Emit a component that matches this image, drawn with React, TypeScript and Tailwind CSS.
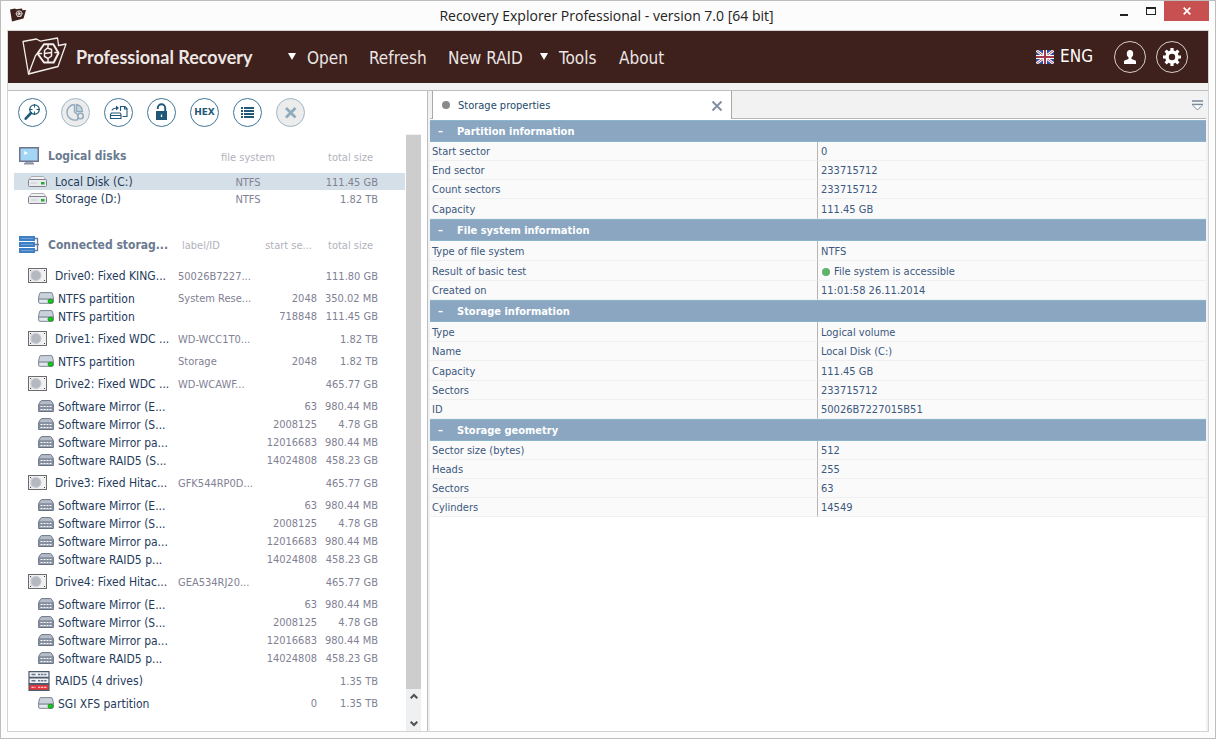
import React, { useState } from "react";

type IconProps = { children: React.ReactNode };

const BrandFolder = () => (
  <svg width="46" height="40" viewBox="0 0 46 40" fill="none" stroke="#f3eeec" strokeWidth="1.3" strokeLinejoin="round" strokeLinecap="round" aria-hidden="true">
    <path d="M6.500 37 1 4.500 14.500 2l4 2.200L35.500 1l1 7" />
    <path d="M6.500 37 13.500 18.500l2-2M6.500 37 36 29.500 44 7l-7.500 1.500" />
    <path d="M15.500 16.500 22 7.200h9.300l5.200 8.800-4.800 9.500H22z" strokeWidth="2" />
    <path d="M22.500 13.500v6M29.500 12.500v6.500M22.500 16.500l7-1M16 16.500l3.500 0M33 15.500l3 0M22.500 13.500l3-2.500 4 1.500M22.500 19.500l3.500 2 3.500-2.500M26 11V8M26 21.500V25" strokeWidth="1.500" />
  </svg>
);

const SmallFolder = () => (
  <svg width="16" height="14" viewBox="0 0 16 14" aria-hidden="true">
    <path d="M0 1.500 5 .5l1 .8L12 .4l.5 1.800L16 2l-2.500 8.500L2 13.500z" fill="#3e201c" />
    <path d="M7.500 3h3.300l1.500 2.600-1.500 2.900H7.500L6 5.800zM6 5.800h6.300M8 3.200l2.700 5M10.500 3.200l-3 5.200" fill="none" stroke="#f3eeec" strokeWidth=".8" />
  </svg>
);

const Flag = () => (
  <svg width="18" height="14" viewBox="0 0 18 14" aria-hidden="true">
    <rect width="18" height="14" fill="#2f4b9b" />
    <path d="M0 0l18 14M18 0L0 14" stroke="#fff" strokeWidth="2.600" />
    <path d="M0 0l18 14M18 0L0 14" stroke="#a8434f" strokeWidth=".9" />
    <path d="M9 0v14M0 7h18" stroke="#fff" strokeWidth="4" />
    <path d="M9 0v14M0 7h18" stroke="#a03a4c" strokeWidth="2" />
  </svg>
);

const Glyph = ({ children }: IconProps) => (
  <svg width="27" height="27" viewBox="0 0 27 27" fill="none" stroke="currentColor" aria-hidden="true">
    {children}
  </svg>
);

const Monitor = () => (
  <svg width="20" height="18" viewBox="0 0 20 18" aria-hidden="true">
    <rect x=".75" y=".75" width="18.500" height="13.500" fill="#a3d5f5" stroke="#70758d" strokeWidth="1.500" />
    <path d="M5 4l4 2-3.500 2z" fill="#fff" />
    <path d="M6 15h8v1H6z" fill="#a5a8b8" />
    <path d="M5 16h10v1.500H5z" fill="#8c90a4" />
  </svg>
);

const StorageStack = () => (
  <svg width="20" height="17" viewBox="0 0 20 17" aria-hidden="true">
    <path d="M0 0h16v5H0zM0 6h16v5H0zM0 12h16v5H0z" fill="#3f7fc4" />
    <path d="M2 2.500h12M2 8.500h12M2 14.500h12" stroke="#6ea3da" />
    <path d="M16 2.500h2.500v12H16M16 8.500h4" fill="none" stroke="#6b7b92" strokeWidth="1.300" />
  </svg>
);

const DiskIcon = () => (
  <svg width="19" height="11" viewBox="0 0 19 11" aria-hidden="true">
    <path d="M.8 4.500 2.500 1.500q.5-1 1.500-1h11q1 0 1.500 1l1.700 3z" fill="#f2f2f3" stroke="#a3a5ae" strokeWidth=".9" />
    <rect x=".5" y="3.500" width="18" height="7" rx="1" fill="#e9eaec" stroke="#80838f" />
    <path d="M3 7h6" stroke="#c9cbd1" />
    <path d="M13 6h3.500v2.500H13z" fill="#1fae2f" />
  </svg>
);

const DriveIcon = () => (
  <svg width="19" height="15" viewBox="0 0 19 15" aria-hidden="true">
    <rect x=".5" y=".5" width="18" height="14" fill="#f1f1f2" stroke="#6b6c70" />
    <path d="M2.500 2.500h3v10h-3z" fill="#dcdce0" />
    <circle cx="8" cy="7.500" r="5" fill="#b4b8c0" stroke="#c7c9d0" />
    <path d="M2 2h1v1H2zM16 2h1v1h-1zM2 12h1v1H2zM16 12h1v1h-1z" fill="#44464c" />
  </svg>
);

const PartitionIcon = () => (
  <svg width="16" height="12" viewBox="0 0 16 12" aria-hidden="true">
    <path d="M.6 6 1.500 1.800Q1.800.6 3 .6h10q1.200 0 1.500 1.200L15.400 6v4q0 1.300-1.300 1.300H1.900Q.6 11.300.6 10z" fill="#c9d1da" stroke="#7c8794" />
    <path d="M1 7h14" stroke="#76828f" />
    <path d="M1.500 8h13v2.500h-13z" fill="#e4e9ee" />
    <ellipse cx="12.500" cy="9.200" rx="2.500" ry="2" fill="#11d411" stroke="#12801a" strokeWidth=".8" />
  </svg>
);

const MirrorIcon = () => (
  <svg width="16" height="12" viewBox="0 0 16 12" aria-hidden="true">
    <path d="M.6 4.500 2.600 1.200q.4-.6 1-.6h8.800q.6 0 1 .6l2 3.300v7H.6z" fill="#b4bcc8" stroke="#6c7788" />
    <path d="M1 4.500h14v1H1zM1 7.500h14v1H1zM1 11h14v1H1z" fill="#657083" />
    <path d="M1 5.500h14v2H1zM1 8.500h14v2H1z" fill="#808a9a" />
    <path d="M2.500 6.500h11.500M2.500 9.500h11.500" stroke="#fff" strokeWidth="1" strokeDasharray="2 1" />
  </svg>
);

const RaidIcon = () => (
  <svg width="22" height="20" viewBox="0 0 22 20" aria-hidden="true">
    <path d="M1 .7h20v5.600H1zM1 7h20v5.600H1z" fill="#f0f2f5" stroke="#4d5c6e" strokeWidth="1.200" />
    <path d="M1 13.300h20v6H1z" fill="#e2363c" stroke="#4d5c6e" strokeWidth="1.200" />
    <path d="M3.500 3.500h4M3.500 9.700h4" stroke="#66758a" strokeWidth="1.500" />
    <path d="M10 3.500h8.500M10 9.700h8.500" stroke="#66758a" strokeWidth="1.500" strokeDasharray="2.300 .8" />
    <path d="M3.500 16.300h4M10 16.300h8.500" stroke="#f4c9cb" strokeWidth="1.300" strokeDasharray="2.300 .8" />
  </svg>
);

const toolButtons = [
  {
    label: "Search for files",
    disabled: false,
    icon: (
      <Glyph>
        <circle cx="15.500" cy="10.500" r="4.700" strokeWidth="1.300" />
        <path d="M15.500 5v3.500M15.500 12.500V16M10 10.500h3.500M17.500 10.500H21" strokeWidth="1" />
        <path d="M12 14l-5.300 5.700" strokeWidth="2.600" strokeLinecap="round" />
      </Glyph>
    ),
  },
  {
    label: "Analyze partition",
    disabled: true,
    icon: (
      <Glyph>
        <path d="M12.500 5.500a7.800 7.800 0 1 0 2 15.400M12.500 5.500V13l4 3.500M14.500 5.500q5.500 1 6 7h-6z" strokeWidth="1.400" />
        <path d="M15 6q4.500 1 5 6h-5z" fill="currentColor" stroke="none" opacity=".35" />
        <circle cx="18.500" cy="17" r="2.800" strokeWidth="1.500" />
        <path d="M16.500 19l-2 2.500" strokeWidth="1.800" />
      </Glyph>
    ),
  },
  {
    label: "Save disk image",
    disabled: false,
    icon: (
      <Glyph>
        <path d="M5.500 19.500v-4l1-1.500h8.500l1 1.500v4zM5.500 16.500h10.500" strokeWidth="1.100" />
        <path d="M7 11.500q.5-2.500 5.500-2.500" strokeWidth="1.200" />
        <path d="M11 6.500 14 9l-3 2.500z" fill="currentColor" stroke="none" />
        <path d="M15.500 12V7.500h4.500l2 2v8h-4.500M19.500 7.500V10H22" strokeWidth="1.100" />
      </Glyph>
    ),
  },
  {
    label: "Unlock storage",
    disabled: false,
    icon: (
      <Glyph>
        <path d="M8 12h11v9H8z" fill="currentColor" stroke="none" />
        <path d="M9.800 10V9a3.700 3.700 0 0 1 7.400 0v3.500" strokeWidth="1.900" />
        <path d="M13.500 15.500v2.500" stroke="#fff" strokeWidth="1.300" />
      </Glyph>
    ),
  },
  {
    label: "Hexadecimal viewer",
    disabled: false,
    icon: <span className="font-['DejaVu_Sans'] text-[9px] leading-none font-bold">HEX</span>,
  },
  {
    label: "List partitions",
    disabled: false,
    icon: (
      <Glyph>
        <path d="M7 9h2M10 9h10M7 12h2M10 12h10M7 15h2M10 15h10M7 18h2M10 18h10" strokeWidth="2" />
      </Glyph>
    ),
  },
  {
    label: "Close storage",
    disabled: true,
    icon: (
      <Glyph>
        <path d="M9 9l9.500 9.500M18.500 9 9 18.500" strokeWidth="2.800" />
      </Glyph>
    ),
  },
];

const logicalDisks = [
  { name: "Local Disk (C:)", fs: "NTFS", size: "111.45 GB", selected: true },
  { name: "Storage (D:)", fs: "NTFS", size: "1.82 TB", selected: false },
];

type Kind = "drive" | "partition" | "mirror" | "raid";
type StorageRow = { kind: Kind; name: string; label?: string; start?: string; size: string };

const storages: StorageRow[] = [
  { kind: "drive", name: "Drive0: Fixed KING...", label: "50026B7227...", size: "111.80 GB" },
  { kind: "partition", name: "NTFS partition", label: "System Rese...", start: "2048", size: "350.02 MB" },
  { kind: "partition", name: "NTFS partition", start: "718848", size: "111.45 GB" },
  { kind: "drive", name: "Drive1: Fixed WDC ...", label: "WD-WCC1T0...", size: "1.82 TB" },
  { kind: "partition", name: "NTFS partition", label: "Storage", start: "2048", size: "1.82 TB" },
  { kind: "drive", name: "Drive2: Fixed WDC ...", label: "WD-WCAWF...", size: "465.77 GB" },
  { kind: "mirror", name: "Software Mirror (E...", start: "63", size: "980.44 MB" },
  { kind: "mirror", name: "Software Mirror (S...", start: "2008125", size: "4.78 GB" },
  { kind: "mirror", name: "Software Mirror pa...", start: "12016683", size: "980.44 MB" },
  { kind: "mirror", name: "Software RAID5 (S...", start: "14024808", size: "458.23 GB" },
  { kind: "drive", name: "Drive3: Fixed Hitac...", label: "GFK544RP0D...", size: "465.77 GB" },
  { kind: "mirror", name: "Software Mirror (E...", start: "63", size: "980.44 MB" },
  { kind: "mirror", name: "Software Mirror (S...", start: "2008125", size: "4.78 GB" },
  { kind: "mirror", name: "Software Mirror pa...", start: "12016683", size: "980.44 MB" },
  { kind: "mirror", name: "Software RAID5 p...", start: "14024808", size: "458.23 GB" },
  { kind: "drive", name: "Drive4: Fixed Hitac...", label: "GEA534RJ20...", size: "465.77 GB" },
  { kind: "mirror", name: "Software Mirror (E...", start: "63", size: "980.44 MB" },
  { kind: "mirror", name: "Software Mirror (S...", start: "2008125", size: "4.78 GB" },
  { kind: "mirror", name: "Software Mirror pa...", start: "12016683", size: "980.44 MB" },
  { kind: "mirror", name: "Software RAID5 p...", start: "14024808", size: "458.23 GB" },
  { kind: "raid", name: "RAID5 (4 drives)", size: "1.35 TB" },
  { kind: "partition", name: "SGI XFS partition", start: "0", size: "1.35 TB" },
];

const kindIcon: Record<Kind, React.ReactNode> = {
  drive: <DriveIcon />,
  partition: <PartitionIcon />,
  mirror: <MirrorIcon />,
  raid: <RaidIcon />,
};

type Property = { name: string; value: string; tall?: boolean; status?: boolean };

const sections: { title: string; rows: Property[] }[] = [
  {
    title: "Partition information",
    rows: [
      { name: "Start sector", value: "0" },
      { name: "End sector", value: "233715712" },
      { name: "Count sectors", value: "233715712" },
      { name: "Capacity", value: "111.45 GB", tall: true },
    ],
  },
  {
    title: "File system information",
    rows: [
      { name: "Type of file system", value: "NTFS", tall: true },
      { name: "Result of basic test", value: "File system is accessible", tall: true, status: true },
      { name: "Created on", value: "11:01:58 26.11.2014" },
    ],
  },
  {
    title: "Storage information",
    rows: [
      { name: "Type", value: "Logical volume", tall: true },
      { name: "Name", value: "Local Disk (C:)" },
      { name: "Capacity", value: "111.45 GB", tall: true },
      { name: "Sectors", value: "233715712" },
      { name: "ID", value: "50026B7227015B51" },
    ],
  },
  {
    title: "Storage geometry",
    rows: [
      { name: "Sector size (bytes)", value: "512" },
      { name: "Heads", value: "255" },
      { name: "Sectors", value: "63" },
      { name: "Cylinders", value: "14549" },
    ],
  },
];

function TitleBar() {
  return (
    <div className="flex h-[29px] shrink-0 items-start pl-[9px]">
      <div className="flex w-[93px] pt-[7px]">
        <SmallFolder />
      </div>
      <h1 className="flex-1 text-center font-['Open_Sans','Noto_Sans',sans-serif] text-[14px] leading-[29px] text-[#222]">
        Recovery Explorer Professional - version 7.0 [64 bit]
      </h1>
      <div className="flex">
        <button type="button" aria-label="Minimize" className="flex h-5 w-[27px] items-center justify-center">
          <svg width="12" height="12" viewBox="0 0 12 12" aria-hidden="true">
            <path d="M2 9h8v2H2z" fill="#222" />
          </svg>
        </button>
        <button type="button" aria-label="Maximize" className="flex h-5 w-[27px] items-center justify-center">
          <svg width="10" height="8" viewBox="0 0 10 8" aria-hidden="true">
            <path d="M0 0h10v8H0zM1 2v5h8V2z" fill="#222" fillRule="evenodd" />
          </svg>
        </button>
        <button type="button" aria-label="Close" className="mr-[6px] flex h-5 w-[45px] items-center justify-center bg-[#c75050]">
          <svg width="8" height="8" viewBox="0 0 8 8" aria-hidden="true">
            <path d="M.7.7l6.600 6.600M7.300.7.7 7.300" stroke="#fff" strokeWidth="1.700" />
          </svg>
        </button>
      </div>
    </div>
  );
}

const Caret = () => (
  <svg width="8" height="7" viewBox="0 0 8 7" className="mb-1" aria-hidden="true">
    <path d="M0 0h8L4 7z" fill="#fff" />
  </svg>
);

function Header() {
  return (
    <header className="flex h-[52px] shrink-0 items-center bg-[#3e201c] pr-5 pl-[14px] text-[#ece6e4]">
      <BrandFolder />
      <span className="w-[217px] pl-2 font-['Lato','Noto_Sans',sans-serif] text-[18px] font-bold whitespace-nowrap">
        Professional Recovery
      </span>
      <nav className="flex items-center pt-[3px] text-[17px] whitespace-nowrap">
        <button type="button" className="flex w-[84px] items-center gap-[11px] pl-[3px]">
          <Caret />
          Open
        </button>
        <button type="button" className="w-[79px] text-left">Refresh</button>
        <button type="button" className="w-[92px] text-left">New RAID</button>
        <button type="button" className="flex w-[79px] items-center gap-[11px]">
          <Caret />
          Tools
        </button>
        <button type="button">About</button>
      </nav>
      <div className="ml-auto flex items-center">
        <button type="button" className="flex items-center gap-[6px] text-[17px] text-white">
          <Flag />
          ENG
        </button>
        <button type="button" aria-label="Account" className="ml-[21px] flex size-8 items-center justify-center rounded-full border border-[#d8cecb]">
          <svg width="12" height="14" viewBox="0 0 12 14" fill="#fff" aria-hidden="true">
            <ellipse cx="6" cy="3.800" rx="3.200" ry="3.800" />
            <path d="M4.500 6h3v3l4 1.500q.5.300.5 1V14H0v-2.500q0-.7.500-1l4-1.500z" />
          </svg>
        </button>
        <button type="button" aria-label="Settings" className="ml-[10px] flex size-8 items-center justify-center rounded-full border border-[#d8cecb]">
          <svg width="18" height="18" viewBox="-9 -9 18 18" aria-hidden="true">
            <circle r="5" fill="none" stroke="#fff" strokeWidth="3.600" />
            <path d="M0-9V-5M0 5V9M-9 0H-5M5 0H9M-6.400-6.400l2.800 2.800M6.400 6.400 3.600 3.600M-6.400 6.400l2.800-2.800M6.400-6.400 3.600-3.600" stroke="#fff" strokeWidth="3.200" />
          </svg>
        </button>
      </div>
    </header>
  );
}

function Sidebar() {
  return (
    <aside className="flex w-[420px] shrink-0 flex-col border-r border-[#bdbdbd] bg-white">
      <div className="flex gap-[14px] px-[10px] pt-[7px] pb-[7px]">
        {toolButtons.map((tool) => (
          <button
            key={tool.label}
            type="button"
            aria-label={tool.label}
            disabled={tool.disabled}
            className="flex size-[29px] items-center justify-center rounded-full border border-[#3f7595] text-[#1f5878] disabled:border-[#9fb6c4] disabled:bg-[#ececed] disabled:text-[#8fabbd]"
          >
            {tool.icon}
          </button>
        ))}
      </div>
      <div className="flex min-h-0 flex-1">
        <div className="min-w-0 flex-1 overflow-hidden pl-[6px] text-[11px] text-[#7f8194]">
          <table className="mt-[5px] w-full table-fixed border-collapse leading-[15px]">
            <colgroup>
              <col />
              <col className="w-[100px]" />
              <col className="w-[80px]" />
              <col className="w-[27px]" />
            </colgroup>
            <thead>
              <tr className="h-[34px] text-[#b1b2bc]">
                <th scope="col" className="p-0 text-left">
                  <div className="flex items-center gap-[9px] pl-[5px] text-[12px] font-bold text-[#6b7a90]">
                    <Monitor />
                    Logical disks
                  </div>
                </th>
                <th scope="col" className="p-0 pt-[2px] text-center font-normal">file system</th>
                <th scope="col" className="p-0 pt-[2px] pr-[5px] text-right font-normal">total size</th>
                <td />
              </tr>
            </thead>
            <tbody>
              {logicalDisks.map((disk) => (
                <tr key={disk.name} className={disk.selected ? "h-[17px] bg-[#d5dfe7]" : "h-[17px]"}>
                  <td className="p-0">
                    <div className="flex items-center gap-2 pl-[14px] text-[12px] text-[#1f3b5c]">
                      <DiskIcon />
                      <span className="pt-[2px]">{disk.name}</span>
                    </div>
                  </td>
                  <td className="p-0 pt-[2px] text-center">{disk.fs}</td>
                  <td className="p-0 pt-[2px] text-right">{disk.size}</td>
                  <td />
                </tr>
              ))}
            </tbody>
          </table>
          <table className="mt-5 w-full table-fixed border-collapse leading-4 whitespace-nowrap">
            <colgroup>
              <col />
              <col className="w-[78px]" />
              <col className="w-[61px]" />
              <col className="w-[61px]" />
              <col className="w-[27px]" />
            </colgroup>
            <thead>
              <tr className="h-[35px] text-[#b1b2bc]">
                <th scope="col" className="p-0 text-left">
                  <div className="flex items-center gap-[9px] pl-[5px] text-[12px] font-bold text-[#6b7a90]">
                    <StorageStack />
                    Connected storag...
                  </div>
                </th>
                <th scope="col" className="p-0 pt-[2px] pl-1 text-left font-normal">label/ID</th>
                <th scope="col" className="p-0 pt-[2px] pr-[5px] text-right font-normal">start se...</th>
                <th scope="col" className="p-0 pt-[2px] pr-[5px] text-right font-normal">total size</th>
                <td />
              </tr>
            </thead>
            <tbody>
              {storages.map((row, i) => {
                const parent = row.kind === "drive" || row.kind === "raid";
                return (
                  <tr key={i} className={parent ? "h-[27px]" : "h-[18px]"}>
                    <td className="p-0">
                      <div
                        className={
                          parent
                            ? "flex items-center pl-[14px] text-[12px] text-[#1f3b5c]"
                            : "flex items-center pl-6 text-[12px] text-[#1f3b5c]"
                        }
                      >
                        <span className={parent ? "w-[27px]" : "w-5"}>{kindIcon[row.kind]}</span>
                        <span className={parent ? "" : "pt-[2px]"}>{row.name}</span>
                      </div>
                    </td>
                    <td className="p-0 pt-[2px]">{row.label}</td>
                    <td className="p-0 pt-[2px] text-right">{row.start}</td>
                    <td className="p-0 pt-[2px] text-right">{row.size}</td>
                    <td />
                  </tr>
                );
              })}
            </tbody>
          </table>
        </div>
        <div className="mr-[6px] ml-px flex w-[15px] flex-col bg-[#eff0f1]">
          <div className="mt-px flex-1 bg-[#cdcdcd]" />
          <button type="button" aria-label="Scroll up" className="flex h-[14px] items-center justify-center">
            <svg width="8" height="6" viewBox="0 0 8 6" fill="none" stroke="#505054" strokeWidth="2" aria-hidden="true">
              <path d="M.7 5.300 4 2l3.300 3.300" />
            </svg>
          </button>
          <button type="button" aria-label="Scroll down" className="mt-[14px] flex h-[14px] items-center justify-center">
            <svg width="8" height="6" viewBox="0 0 8 6" fill="none" stroke="#505054" strokeWidth="2" aria-hidden="true">
              <path d="M.7.7 4 4 7.300.7" />
            </svg>
          </button>
        </div>
      </div>
    </aside>
  );
}

function Properties() {
  const [closed, setClosed] = useState<string[]>([]);
  const toggle = (title: string) =>
    setClosed((list) => (list.includes(title) ? list.filter((t) => t !== title) : [...list, title]));

  return (
    <main className="flex min-w-0 flex-1 flex-col bg-[#f2f2f2] pr-[2px] pl-[2px]">
      <div className="flex h-7 shrink-0">
        <div className="w-[2px] border-b border-[#b8b8b8]" />
        <div className="flex w-[300px] items-center border-x border-[#a9a9a9] bg-white pr-2 pl-[9px] text-[11px] text-[#1c4a6b]">
          <span className="mr-2 size-2 rounded-full bg-[#8a8a8a]" />
          <span className="pt-[3px]">Storage properties</span>
          <button type="button" aria-label="Close tab" className="ml-auto pt-[2px]">
            <svg width="12" height="12" viewBox="0 0 12 12" aria-hidden="true">
              <path d="M1.500 1.500l9 9M10.500 1.500l-9 9" stroke="#8490a2" strokeWidth="2" />
            </svg>
          </button>
        </div>
        <div className="flex flex-1 items-center justify-end border-b border-[#b8b8b8] pr-[3px]">
          <button type="button" aria-label="Tab list" className="pt-[2px]">
            <svg width="11" height="11" viewBox="0 0 11 11" aria-hidden="true">
              <path d="M0 1h11M0 4.500h11" stroke="#76889a" strokeWidth="1.500" />
              <path d="M1 5.500 5.500 10 10 5.500" fill="#fff" stroke="#76889a" />
            </svg>
          </button>
        </div>
      </div>
      <div className="flex-1 bg-white pt-px">
        {sections.map((section) => (
          <section key={section.title}>
            <h2>
              <button
                type="button"
                onClick={() => toggle(section.title)}
                className="flex h-[22px] w-full items-center border-y border-[#8bb5cd] bg-[#8aa6c1] pt-[2px] pl-2 text-[11px] font-bold text-white"
              >
                <span className="w-[19px] text-left">{closed.includes(section.title) ? "+" : "–"}</span>
                {section.title}
              </button>
            </h2>
            {!closed.includes(section.title) && (
              <table className="w-full table-fixed border-separate border-spacing-0 bg-[#fafafa] text-[11px] leading-4 text-[#3b587e]">
                <tbody>
                  {section.rows.map((row) => (
                    <tr key={row.name} className={row.tall ? "h-5" : "h-[19px]"}>
                      <th scope="row" className="w-1/2 border-r border-b border-r-[#b5b5b5] border-b-[#f0f0f0] p-0 pt-[2px] pl-[2px] text-left font-normal">
                        {row.name}
                      </th>
                      <td className="border-b border-[#f0f0f0] p-0 pt-[2px] pl-[3px]">
                        {row.status ? (
                          <span className="flex items-center gap-1 pl-px">
                            <span className="size-2 rounded-full bg-[#5fb36a]" />
                            {row.value}
                          </span>
                        ) : (
                          row.value
                        )}
                      </td>
                    </tr>
                  ))}
                </tbody>
              </table>
            )}
          </section>
        ))}
      </div>
    </main>
  );
}

export default function App() {
  return (
    <div className="flex h-screen min-h-[739px] flex-col border border-[#bdbdbd] bg-[#fcfcfc] font-['DejaVu_Sans_Condensed','Noto_Sans',sans-serif]">
      <TitleBar />
      <div className="mx-[6px] mb-[6px] flex min-h-0 flex-1 flex-col border border-[#d2d2d2]">
        <Header />
        <div className="h-2 shrink-0 border-b border-[#bdbdbd] bg-[#f2f2f2]" />
        <div className="flex min-h-0 flex-1">
          <Sidebar />
          <Properties />
        </div>
      </div>
    </div>
  );
}
